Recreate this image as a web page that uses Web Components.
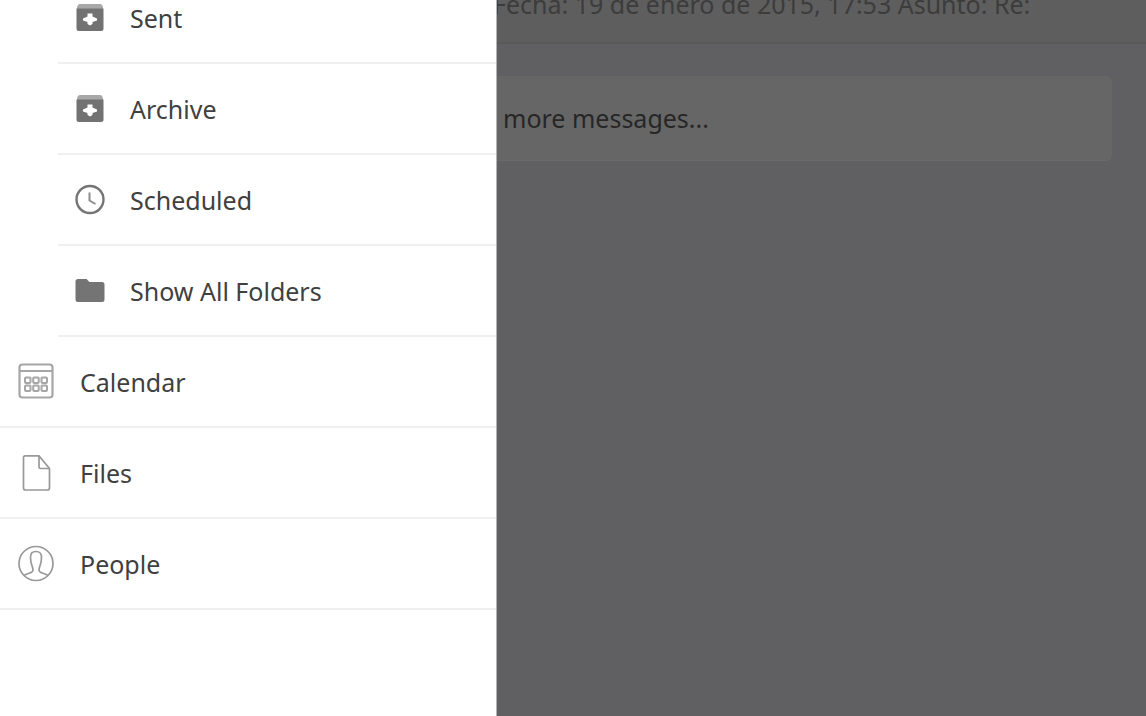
<!DOCTYPE html>
<html lang="en">
<head>
<meta charset="utf-8">
<title>Mail</title>
<style>
  html, body { height: 100%; margin: 0; }
  body { font-family: "Noto Sans", "Open Sans", sans-serif; font-size: 25px; line-height: 34px; color: #404040; overflow: hidden; }
</style>
</head>
<body>
<mail-app>
  <side-drawer slot="drawer">
    <folder-group>
      <nav-item nested icon="archive">Sent</nav-item>
      <nav-item nested icon="archive">Archive</nav-item>
      <nav-item nested icon="clock">Scheduled</nav-item>
      <nav-item nested icon="folder">Show All Folders</nav-item>
    </folder-group>
    <nav-item icon="calendar">Calendar</nav-item>
    <nav-item icon="file">Files</nav-item>
    <nav-item icon="person">People</nav-item>
  </side-drawer>
  <message-pane slot="content">
    <span slot="preview">Fecha: 19 de enero de 2015, 17:53 Asunto: Re:</span>
    <more-card>more messages...</more-card>
  </message-pane>
</mail-app>

<script>
const icons = {
  archive: `<path d="M5 7.500Q5.500 4 8 4H28Q30.500 4 31 7.500V10H5Z" fill="#a8a8a8"/><path d="M4.500 8.500H31.500V28.500Q31.500 31 29 31H7Q4.500 31 4.500 28.500Z" fill="#727272"/><path d="M15.500 13.500H20.500V16.500L25 18.500V20.500L20.500 22V24L18 25.500L15.500 24V22L11 20.500V18.500L15.500 16.500Z" fill="#fff"/>`,
  clock: `<circle cx="18" cy="17.500" r="13.500" fill="none" stroke="#747474" stroke-width="2.400"/><path d="M17.500 10.500V18.500L23.500 22" fill="none" stroke="#8c8c8c" stroke-width="2"/>`,
  folder: `<path d="M3.500 8.500Q3.500 6 6 6H14.500L17.500 9H30Q32.500 9 32.500 11.500V26.500Q32.500 29 30 29H6Q3.500 29 3.500 26.500Z" fill="#747474"/>`,
  calendar: `<g transform="translate(0 -1)"><rect x="1.500" y="1.500" width="33" height="33" rx="3" fill="none" stroke="#a6a6a6" stroke-width="2.200"/><path d="M2 8H34" stroke="#a6a6a6" stroke-width="2"/><g fill="none" stroke="#a6a6a6" stroke-width="2"><rect x="7" y="14.500" width="5.500" height="5.500" rx="1"/><rect x="15.200" y="14.500" width="5.500" height="5.500" rx="1"/><rect x="23.500" y="14.500" width="5.500" height="5.500" rx="1"/><rect x="7" y="22.500" width="5.500" height="5.500" rx="1"/><rect x="15.200" y="22.500" width="5.500" height="5.500" rx="1"/><rect x="23.500" y="22.500" width="5.500" height="5.500" rx="1"/></g></g>`,
  file: `<path d="M7 .900H21L31.500 13.500V33Q31.500 35 29 35H7.500Q5.500 35 5.500 33V2.500Q5.500 .900 7 .900ZM21 1V12Q21 13.500 22.500 13.500H31" fill="none" stroke="#999" stroke-width="1.700"/>`,
  person: `<g transform="translate(0 -1)" fill="none" stroke="#999" stroke-width="1.700"><circle cx="18" cy="18.500" r="17"/><path d="M6 30.500C9 28 15 28.500 15 25C15 21 12.500 20 12.500 12.500C12.500 8 14 6.500 18 6.500C22 6.500 23.500 8 23.500 12.500C23.500 20 21 21 21 25C21 28.500 27 28 30 30.500"/></g>`
};

function define(name, html, setup) {
  const template = document.createElement('template');
  template.innerHTML = html;
  customElements.define(name, class extends HTMLElement {
    constructor() {
      super();
      this.attachShadow({ mode: 'open' }).append(template.content.cloneNode(true));
    }
    connectedCallback() { if (setup) setup(this); }
  });
}

define('mail-app', `
  <style>
    :host { display: flex; height: 100vh; overflow: hidden; background: #606062; }
  </style>
  <slot name="drawer"></slot><slot name="content"></slot>`);

define('side-drawer', `
  <style>
    :host { display: block; box-sizing: border-box; flex: none; width: 497px; max-width: 85vw; overflow: hidden; background: #fff; border-right: 1px solid #b4b4b4; }
    /* The list is scrolled, so its first row is partly out of view. */
    nav { margin-top: -27px; }
  </style>
  <nav aria-label="Folders"><slot></slot></nav>`);

define('folder-group', `
  <style>:host { display: block; padding-left: 58px; }</style>
  <slot></slot>`);

define('nav-item', `
  <style>
    :host { display: block; }
    a { display: flex; align-items: center; gap: 26px; box-sizing: border-box; height: 91px; padding-left: 18px; border-bottom: 2px solid #f0f0f0; color: inherit; text-decoration: none; }
    :host([nested]) a { gap: 22px; padding-left: 14px; }
    svg { flex: none; width: 36px; height: 36px; overflow: visible; }
  </style>
  <a href="#"><svg viewBox="0 0 36 36" aria-hidden="true"></svg><slot></slot></a>`,
  el => { el.shadowRoot.querySelector('svg').innerHTML = icons[el.getAttribute('icon')]; });

define('message-pane', `
  <style>
    :host { display: block; flex: 1; min-width: 0; overflow: hidden; }
    header { display: flex; align-items: flex-end; box-sizing: border-box; height: 44px; padding-bottom: 21px; border-bottom: 2px solid #59595a; background: #5e5e5e; color: #3c3c3c; white-space: nowrap; }
    header ::slotted(*) { margin-left: -4px; }
    main { padding: 32px 34px 0 0; }
  </style>
  <header><slot name="preview"></slot></header>
  <main><slot></slot></main>`);

define('more-card', `
  <style>
    :host { display: block; }
    button { display: block; width: 100%; padding: 25px 6px; border: 0; border-bottom: 1px solid #6a6a6c; border-radius: 0 6px 6px 0; background: #666; color: #262626; font: inherit; text-align: left; }
  </style>
  <button type="button"><slot></slot></button>`);
</script>
</body>
</html>
